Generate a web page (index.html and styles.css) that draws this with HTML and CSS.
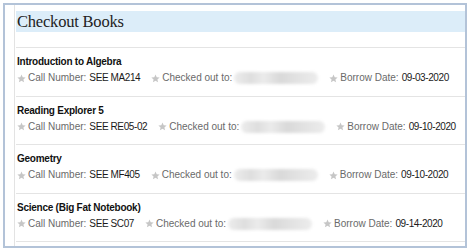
FILE: index.html
```html
<!DOCTYPE html>
<html>
<head>
<meta charset="utf-8">
<link rel="stylesheet" href="styles.css">
</head>
<body>
<svg width="0" height="0" class="defs">
  <defs>
    <symbol id="star" viewBox="0 0 24 24"><path d="M12 1.5l3.2 7.2 7.8.7-5.9 5.2 1.8 7.7L12 18.3l-6.9 4 1.8-7.7L1 9.4l7.8-.7z"/></symbol>
  </defs>
</svg>
<div class="frame">
  <div class="panel">
    <h1 class="header">Checkout Books</h1>
    <div class="list">
      <div class="item">
        <div class="title">Introduction to Algebra</div>
        <div class="meta">
          <span class="field"><svg class="star"><use href="#star"/></svg><span class="label">Call Number:</span><span class="value">SEE MA214</span></span>
          <span class="field"><svg class="star"><use href="#star"/></svg><span class="label">Checked out to:</span><span class="blur"></span></span>
          <span class="field"><svg class="star"><use href="#star"/></svg><span class="label">Borrow Date:</span><span class="value">09-03-2020</span></span>
        </div>
      </div>
      <div class="item">
        <div class="title">Reading Explorer 5</div>
        <div class="meta">
          <span class="field"><svg class="star"><use href="#star"/></svg><span class="label">Call Number:</span><span class="value">SEE RE05-02</span></span>
          <span class="field"><svg class="star"><use href="#star"/></svg><span class="label">Checked out to:</span><span class="blur"></span></span>
          <span class="field"><svg class="star"><use href="#star"/></svg><span class="label">Borrow Date:</span><span class="value">09-10-2020</span></span>
        </div>
      </div>
      <div class="item">
        <div class="title">Geometry</div>
        <div class="meta">
          <span class="field"><svg class="star"><use href="#star"/></svg><span class="label">Call Number:</span><span class="value">SEE MF405</span></span>
          <span class="field"><svg class="star"><use href="#star"/></svg><span class="label">Checked out to:</span><span class="blur"></span></span>
          <span class="field"><svg class="star"><use href="#star"/></svg><span class="label">Borrow Date:</span><span class="value">09-10-2020</span></span>
        </div>
      </div>
      <div class="item">
        <div class="title">Science (Big Fat Notebook)</div>
        <div class="meta">
          <span class="field"><svg class="star"><use href="#star"/></svg><span class="label">Call Number:</span><span class="value">SEE SC07</span></span>
          <span class="field"><svg class="star"><use href="#star"/></svg><span class="label">Checked out to:</span><span class="blur"></span></span>
          <span class="field"><svg class="star"><use href="#star"/></svg><span class="label">Borrow Date:</span><span class="value">09-14-2020</span></span>
        </div>
      </div>
    </div>
  </div>
</div>
</body>
</html>
```
FILE: styles.css
```css
html, body {
  margin: 0;
  padding: 0;
  background: #fff;
}
.defs {
  position: absolute;
  width: 0;
  height: 0;
}
.frame {
  margin: 3px 0 0 3px;
  width: 460px;
  height: 241px;
  border: 2px solid #b3c3d8;
  overflow: hidden;
  background: #fff;
}
.panel {
  margin-left: 9px;
  height: 100%;
  border-left: 1px solid #e3e3e3;
  padding-left: 1px;
  padding-top: 6px;
  box-sizing: border-box;
}
.header {
  margin: 0;
  height: 21px;
  background: #dcedf9;
  font-family: "Liberation Serif", serif;
  font-weight: normal;
  font-size: 16.5px;
  letter-spacing: -0.2px;
  line-height: 22px;
  color: #222;
  padding-left: 1px;
}
.list {
  margin-top: 15px;
}
.item {
  border-top: 1px solid #e4e4e4;
  padding: 7px 0 10.5px 1px;
  font-family: "Liberation Sans", Arial, sans-serif;
}
.item:last-child {
  border-bottom: 1px solid #e4e4e4;
}
.title {
  font-weight: bold;
  font-size: 10px;
  letter-spacing: -0.25px;
  color: #111;
  line-height: 14px;
  height: 14px;
}
.meta {
  margin-top: 2px;
  display: flex;
  align-items: center;
  gap: 11px;
  line-height: 14px;
  height: 14px;
  font-size: 10px;
}
.field {
  display: flex;
  align-items: center;
  white-space: nowrap;
}
.star {
  width: 9px;
  height: 9px;
  fill: #c6c6c6;
  margin-right: 2px;
}
.label {
  color: #6a6a6a;
}
.value {
  color: #1a1a1a;
  margin-left: 3px;
  letter-spacing: -0.4px;
}
.blur {
  display: inline-block;
  width: 84px;
  height: 12px;
  margin-left: 2px;
  border-radius: 6px;
  background: linear-gradient(90deg, #ececec 0%, #dedede 20%, #ebebeb 35%, #d9d9d9 55%, #e2e2e2 75%, #ececec 100%);
  filter: blur(1.5px);
}
```
